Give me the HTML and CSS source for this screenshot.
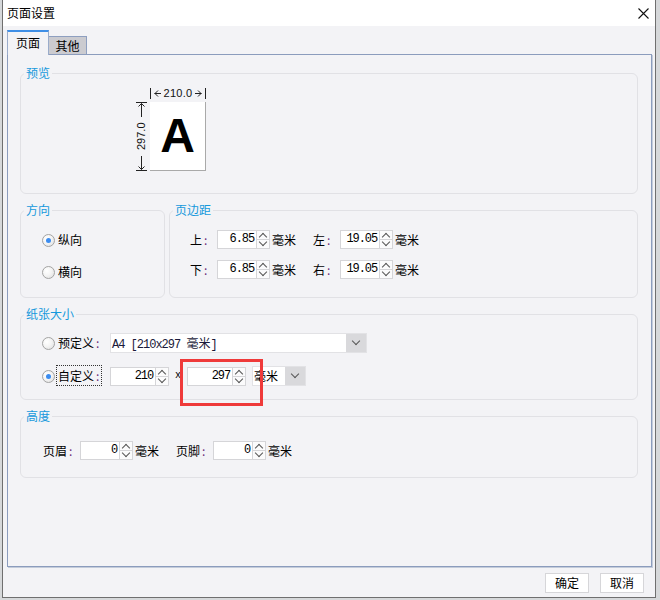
FILE: index.html
```html
<!DOCTYPE html>
<html lang="zh">
<head>
<meta charset="utf-8">
<title>页面设置</title>
<link rel="stylesheet" href="styles.css">
</head>
<body>
<div class="dialog">
  <div class="titlebar">
    <span class="title">页面设置</span>
    <svg class="close" width="11" height="11" viewBox="0 0 11 11"><path d="M0.5 0.5 L10.5 10.5 M10.5 0.5 L0.5 10.5" stroke="#111" stroke-width="1.1" fill="none"/></svg>
  </div>
  <div class="tabs">
    <div class="tab active">页面</div>
    <div class="tab">其他</div>
  </div>
  <div class="panel">
    <fieldset class="group g-preview">
      <legend>预览</legend>
      <div class="pv">
        <div class="pv-corner"></div>
        <div class="dim-h">
          <span class="vbar"></span>
          <svg width="7" height="9" viewBox="0 0 7 9"><path d="M0.5 4.5 H7 M4 1.5 L1 4.5 L4 7.5" stroke="#222" fill="none"/></svg>
          <span class="dim-txt">210.0</span>
          <svg width="7" height="9" viewBox="0 0 7 9"><path d="M0 4.5 H6.5 M3 1.5 L6 4.5 L3 7.5" stroke="#222" fill="none"/></svg>
          <span class="vbar"></span>
        </div>
        <div class="dim-v">
          <span class="hbar"></span>
          <svg width="9" height="14" viewBox="0 0 9 14"><path d="M4.5 0.5 V14 M1.5 3.5 L4.5 0.5 L7.5 3.5" stroke="#222" fill="none"/></svg>
          <span class="dim-vtxt">297.0</span>
          <svg width="9" height="14" viewBox="0 0 9 14"><path d="M4.5 0 V13.5 M1.5 10.5 L4.5 13.5 L7.5 10.5" stroke="#222" fill="none"/></svg>
          <span class="hbar"></span>
        </div>
        <div class="paper">A</div>
      </div>
    </fieldset>

    <div class="row2">
      <fieldset class="group g-orient">
        <legend>方向</legend>
        <div class="orient-list">
          <label class="radio-row"><span class="radio checked"></span><span>纵向</span></label>
          <label class="radio-row"><span class="radio"></span><span>横向</span></label>
        </div>
      </fieldset>
      <fieldset class="group g-margins">
        <legend>页边距</legend>
        <div class="margin-list">
          <div class="field-row">
            <span class="lbl lbl-1">上<span class="colon">:</span></span>
            <span class="num"><span class="val">6.85</span><span class="spin"><span class="up"></span><span class="dn"></span></span></span>
            <span class="unit">毫米</span>
            <span class="lbl lbl-1 lbl-next">左<span class="colon">:</span></span>
            <span class="num"><span class="val">19.05</span><span class="spin"><span class="up"></span><span class="dn"></span></span></span>
            <span class="unit">毫米</span>
          </div>
          <div class="field-row">
            <span class="lbl lbl-1">下<span class="colon">:</span></span>
            <span class="num"><span class="val">6.85</span><span class="spin"><span class="up"></span><span class="dn"></span></span></span>
            <span class="unit">毫米</span>
            <span class="lbl lbl-1 lbl-next">右<span class="colon">:</span></span>
            <span class="num"><span class="val">19.05</span><span class="spin"><span class="up"></span><span class="dn"></span></span></span>
            <span class="unit">毫米</span>
          </div>
        </div>
      </fieldset>
    </div>

    <fieldset class="group g-paper">
      <legend>纸张大小</legend>
      <div class="paper-list">
        <div class="radio-row">
          <span class="radio"></span>
          <span class="plabel">预定义<span class="colon">:</span></span>
          <span class="combo combo-wide"><span class="combo-txt mono">A4 [210x297 <span class="cjk">毫米</span>]</span><span class="combo-btn"></span></span>
        </div>
        <div class="radio-row">
          <span class="radio checked"></span>
          <span class="plabel"><span class="focus">自定义<span class="colon">:</span></span></span>
          <span class="num num-w"><span class="val">210</span><span class="spin"><span class="up"></span><span class="dn"></span></span></span>
          <span class="times">x</span>
          <span class="mark"><span class="num num-w"><span class="val">297</span><span class="spin"><span class="up"></span><span class="dn"></span></span></span></span>
          <span class="combo combo-unit"><span class="combo-txt">毫米</span><span class="combo-btn"></span></span>
        </div>
      </div>
    </fieldset>

    <fieldset class="group g-height">
      <legend>高度</legend>
      <div class="field-row height-row">
        <span class="lbl lbl-2">页眉<span class="colon">:</span></span>
        <span class="num"><span class="val">0</span><span class="spin"><span class="up"></span><span class="dn"></span></span></span>
        <span class="unit">毫米</span>
        <span class="lbl lbl-2 lbl-next">页脚<span class="colon">:</span></span>
        <span class="num"><span class="val">0</span><span class="spin"><span class="up"></span><span class="dn"></span></span></span>
        <span class="unit">毫米</span>
      </div>
    </fieldset>
  </div>
  <div class="footer">
    <button class="btn">确定</button>
    <button class="btn">取消</button>
  </div>
</div>
</body>
</html>
```
FILE: styles.css
```css
* { box-sizing: border-box; }
html, body { margin: 0; padding: 0; }
body {
  width: 660px;
  height: 600px;
  overflow: hidden;
  background: #d6d8da;
  font-family: "Noto Sans CJK SC", "Microsoft YaHei", sans-serif;
  font-size: 12px;
  color: #000;
}
.dialog {
  margin-left: 2px;
  width: 654px;
  height: 598px;
  background: #f3f3f6;
  border: 1px solid #6f6f6f;
  border-top: none;
  display: flex;
  flex-direction: column;
}
.titlebar {
  height: 26px;
  background: #fff;
  display: flex;
  align-items: center;
  justify-content: space-between;
  padding: 0 6px 0 4px;
  flex: none;
}
.title { font-size: 12px; line-height: 16px; }
.close { display: block; }

.tabs {
  margin-top: 4px;
  margin-left: 4px;
  height: 24px;
  display: flex;
  align-items: flex-end;
  flex: none;
}
.tab {
  height: 18px;
  width: 38px;
  border: 1px solid #8e9fc0;
  border-bottom: none;
  border-left: none;
  background: #cbcbd0;
  display: flex;
  align-items: center;
  justify-content: center;
  line-height: 16px;
}
.tab.active {
  width: 42px;
  height: 25px;
  margin-bottom: -1px;
  background: #f3f3f6;
  border-left: 1px solid #9aaccb;
  border-right: 1px solid #9aaccb;
  border-top: 2px solid #3f8fe6;
  position: relative;
  z-index: 1;
  padding-bottom: 2px;
}
.panel {
  margin-left: 4px;
  width: 645px;
  height: 513px;
  border: 1px solid #8b9cbd;
  box-shadow: 1px 1px 0 #c4ccda;
  padding: 10px 13px 0 12px;
  flex: none;
}
.group {
  margin: 0;
  padding: 0;
  border: 1px solid #e1e1e5;
  border-radius: 6px;
  min-width: 0;
}
.group legend {
  font-size: 12px;
  line-height: 16px;
  padding: 0 2px;
  margin-left: 3px;
  color: #1699dc;
}
.g-preview { height: 129px; }
.row2 { display: flex; gap: 4px; margin-top: 8px; }
.g-orient { width: 145px; height: 96px; }
.g-margins { width: 469px; height: 96px; }
.g-paper { margin-top: 8px; height: 94px; }
.g-height { margin-top: 8px; height: 70px; }

/* preview */
.pv {
  margin: 6px 0 0 115px;
  display: grid;
  grid-template-columns: 14px 56px;
  grid-template-rows: 15px 70px;
}
.dim-h {
  display: flex;
  align-items: center;
  justify-content: space-between;
  width: 56px;
  height: 13px;
  font-family: "Liberation Sans", sans-serif;
  font-size: 11px;
  line-height: 13px;
  color: #111;
}
.vbar { width: 1px; height: 11px; background: #222; }
.dim-txt { letter-spacing: 0.3px; }
.dim-v {
  display: flex;
  flex-direction: column;
  align-items: center;
  width: 11px;
  height: 69px;
}
.hbar { width: 11px; height: 1px; background: #222; flex: none; }
.dim-v svg { flex: none; }
.dim-vtxt {
  flex: 1;
  writing-mode: vertical-rl;
  transform: rotate(180deg);
  font-family: "Liberation Sans", sans-serif;
  font-size: 11px;
  line-height: 11px;
  text-align: center;
  color: #111;
}
.paper {
  width: 56px;
  height: 69px;
  background: #fff;
  border-right: 1px solid #a9a9a9;
  border-bottom: 1px solid #a9a9a9;
  display: flex;
  align-items: center;
  justify-content: center;
  font-family: "Liberation Sans", Arial, sans-serif;
  font-weight: bold;
  font-size: 48px;
  line-height: 1;
}

/* radios */
.orient-list {
  padding: 12px 0 0 21px;
  display: flex;
  flex-direction: column;
  gap: 12px;
}
.radio-row {
  display: flex;
  align-items: center;
  height: 20px;
  line-height: 16px;
}
.radio {
  width: 13px;
  height: 13px;
  border-radius: 50%;
  border: 1px solid #a3a3a3;
  background: radial-gradient(circle at 35% 35%, #ffffff 0%, #f4f4f4 45%, #dcdcdc 100%);
  margin-right: 3px;
  flex: none;
  display: flex;
  align-items: center;
  justify-content: center;
}
.radio.checked::after {
  content: "";
  width: 5px;
  height: 5px;
  border-radius: 50%;
  background: #3b8cf0;
}

/* fields */
.margin-list {
  padding: 12px 0 0 20px;
  display: flex;
  flex-direction: column;
  gap: 11px;
}
.field-row {
  display: flex;
  align-items: center;
  height: 19px;
  line-height: 16px;
}
.lbl { flex: none; }
.lbl-1 { width: 27px; }
.lbl-2 { width: 37px; }
.lbl-next { margin-left: 17px; }
.colon { color: #6b2a7a; margin-left: 2px; }
.num {
  display: flex;
  height: 19px;
  flex: none;
}
.val {
  width: 40px;
  height: 19px;
  background: #fff;
  border: 1px solid #d5d5d8;
  text-align: right;
  padding-right: 2px;
  font-family: "Liberation Mono", monospace;
  font-size: 12px;
  letter-spacing: -1.1px;
  line-height: 17px;
  color: #000;
}
.num-w .val { width: 46px; }
.spin {
  width: 13px;
  height: 19px;
  display: flex;
  flex-direction: column;
}
.spin .up, .spin .dn {
  flex: 1;
  background: #fbfbfc;
  border: 1px solid #d5d5d8;
  border-left: none;
  display: flex;
  justify-content: center;
  align-items: center;
}
.spin .dn { border-top: none; }
.spin .up::before, .spin .dn::before {
  content: "";
  width: 5px;
  height: 5px;
  border-left: 1px solid #555;
  border-top: 1px solid #555;
}
.spin .up::before { transform: translateY(2px) rotate(45deg); }
.spin .dn::before { transform: translateY(-2px) rotate(225deg); }
.unit { margin-left: 2px; flex: none; }
.height-row { padding: 17px 0 0 22px; height: auto; }

/* paper */
.paper-list {
  padding: 11px 0 0 21px;
  display: flex;
  flex-direction: column;
  gap: 13px;
}
.plabel { width: 52px; flex: none; padding-left: 0; }
.focus { border: 1px dotted #333; padding: 1px 2px 1px 1px; margin-left: -2px; }
.combo {
  display: flex;
  height: 20px;
  border: 1px solid #e2e2e5;
  background: #fff;
  flex: none;
}
.combo-wide { width: 257px; }
.combo-unit { width: 54px; margin-left: 6px; }
.combo-txt {
  flex: 1;
  line-height: 18px;
  padding-left: 1px;
  white-space: nowrap;
  overflow: hidden;
}
.mono {
  font-family: "Liberation Mono", "Noto Sans CJK SC", monospace;
  letter-spacing: -1px;
  color: #1a1a3a;
}
.cjk { font-family: "Noto Sans CJK SC", sans-serif; letter-spacing: 0; }
.combo-btn {
  width: 20px;
  background: #d9d9dc;
  display: flex;
  align-items: center;
  justify-content: center;
}
.combo-btn::before {
  content: "";
  width: 5px;
  height: 5px;
  border-right: 1px solid #555;
  border-bottom: 1px solid #555;
  transform: translateY(-2px) rotate(45deg);
}
.times {
  width: 18px;
  text-align: center;
  font-family: "Liberation Mono", monospace;
  font-size: 10px;
  flex: none;
}
.mark { position: relative; display: flex; }
.mark::after {
  content: "";
  position: absolute;
  left: -7px;
  top: -8px;
  width: 77px;
  height: 41px;
  border: 3px solid #ef3a3a;
}

/* footer */
.footer {
  display: flex;
  justify-content: flex-end;
  gap: 11px;
  padding: 6px 11px 0 0;
}
.btn {
  width: 44px;
  height: 20px;
  background: #fff;
  border: 1px solid #d6d6d9;
  font-family: "Noto Sans CJK SC", sans-serif;
  font-size: 12px;
  line-height: 16px;
  padding: 0;
  color: #000;
}
```
